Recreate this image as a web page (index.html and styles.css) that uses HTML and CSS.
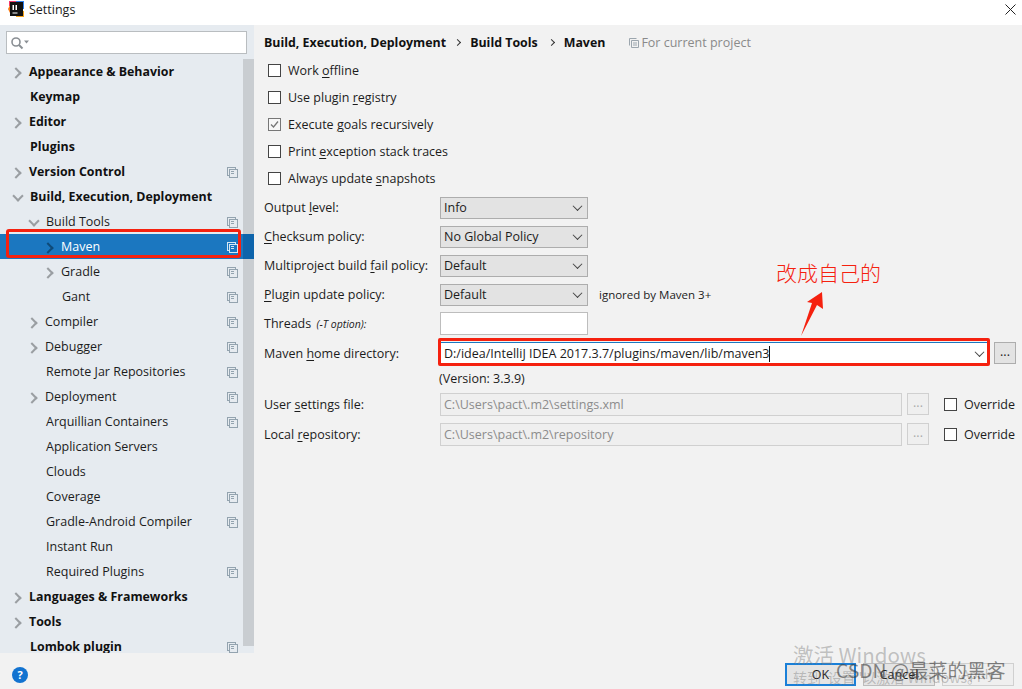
FILE: index.html
```html
<!DOCTYPE html>
<html lang="en">
<head>
<meta charset="utf-8">
<title>Settings</title>
<link rel="stylesheet" href="styles.css">
</head>
<body>
<div class="window">
  <header class="titlebar">
    <svg class="applogo" width="16" height="16" viewBox="0 0 16 16"><path d="M1 0h7v5H1z" fill="#f2386b"/><path d="M8 0h8v8H8z" fill="#2f80ed"/><path d="M0 8l3-6v12z" fill="#f97a12"/><path d="M8 10h8v6H8z" fill="#f4a21a"/><rect x="2" y="1" width="13" height="14" fill="#111"/><path d="M4.500 4h1.500v5H4.500zM7.500 4h1.500v5H7.500zM4.500 11.500h5v1h-5z" fill="#fff"/></svg>
    <span class="title">Settings</span>
    <svg class="close" width="11" height="11" viewBox="0 0 11 11"><path d="M.5.500l10 10M10.500.500l-10 10" stroke="#222" fill="none"/></svg>
  </header>
  <div class="main">
    <aside class="sidebar">
      <div class="search">
        <svg width="20" height="14" viewBox="0 0 20 14"><circle cx="6" cy="6" r="4" fill="none" stroke="#8a8f94" stroke-width="1.600"/><path d="M9 9l3.500 3.500" stroke="#8a8f94" stroke-width="2"/><path d="M14 4.500h5l-2.500 3z" fill="#8a8f94"/></svg>
      </div>
      <div class="treewrap">
        <nav class="tree">
          <div class="row b l0"><i class="arr r"></i><span>Appearance &amp; Behavior</span></div>
          <div class="row b l0"><i class="arr"></i><span>Keymap</span></div>
          <div class="row b l0"><i class="arr r"></i><span>Editor</span></div>
          <div class="row b l0"><i class="arr"></i><span>Plugins</span></div>
          <div class="row b l0 c"><i class="arr r"></i><span>Version Control</span></div>
          <div class="row b l0"><i class="arr d"></i><span>Build, Execution, Deployment</span></div>
          <div class="row l1 c"><i class="arr d"></i><span>Build Tools</span></div>
          <div class="row l2 c sel"><i class="arr r"></i><span>Maven</span></div>
          <div class="row l2 c"><i class="arr r"></i><span>Gradle</span></div>
          <div class="row l2 c"><i class="arr"></i><span>Gant</span></div>
          <div class="row l1 c"><i class="arr r"></i><span>Compiler</span></div>
          <div class="row l1 c"><i class="arr r"></i><span>Debugger</span></div>
          <div class="row l1 c"><i class="arr"></i><span>Remote Jar Repositories</span></div>
          <div class="row l1 c"><i class="arr r"></i><span>Deployment</span></div>
          <div class="row l1 c"><i class="arr"></i><span>Arquillian Containers</span></div>
          <div class="row l1"><i class="arr"></i><span>Application Servers</span></div>
          <div class="row l1"><i class="arr"></i><span>Clouds</span></div>
          <div class="row l1 c"><i class="arr"></i><span>Coverage</span></div>
          <div class="row l1 c"><i class="arr"></i><span>Gradle-Android Compiler</span></div>
          <div class="row l1"><i class="arr"></i><span>Instant Run</span></div>
          <div class="row l1 c"><i class="arr"></i><span>Required Plugins</span></div>
          <div class="row b l0"><i class="arr r"></i><span>Languages &amp; Frameworks</span></div>
          <div class="row b l0"><i class="arr r"></i><span>Tools</span></div>
          <div class="row b l0 c last"><i class="arr"></i><span>Lombok plugin</span></div>
        </nav>
        <div class="scroll"></div>
      </div>
    </aside>
    <section class="content">
      <div class="crumbs">
        <b>Build, Execution, Deployment</b><i class="sep"></i><b>Build Tools</b><i class="sep"></i><b>Maven</b>
        <span class="project"><svg class="copy" width="10" height="10" viewBox="0 0 10 10"><path d="M.500 7.500V.500h7M2.500 2.500h7v7h-7zM4 5h4M4 7h4" fill="none" stroke="#9ca6ae"/></svg>For current project</span>
      </div>
      <div class="checks">
        <label class="check"><i class="box"></i><span>Work <u>o</u>ffline</span></label>
        <label class="check"><i class="box"></i><span>Use plugin <u>r</u>egistry</span></label>
        <label class="check"><i class="box on"><svg width="13" height="13" viewBox="0 0 13 13"><path d="M3 6.500l2.500 2.500 4.500-5.500" fill="none" stroke="#777" stroke-width="1.300"/></svg></i><span>Execute <u>g</u>oals recursively</span></label>
        <label class="check"><i class="box"></i><span>Print <u>e</u>xception stack traces</span></label>
        <label class="check"><i class="box"></i><span>Always update <u>s</u>napshots</span></label>
      </div>
      <div class="fields">
        <div class="field"><span class="lab">Output <u>l</u>evel:</span><div class="combo"><span>Info</span><i class="chev"></i></div></div>
        <div class="field"><span class="lab"><u>C</u>hecksum policy:</span><div class="combo"><span>No Global Policy</span><i class="chev"></i></div></div>
        <div class="field"><span class="lab">Multiproject build <u>f</u>ail policy:</span><div class="combo"><span>Default</span><i class="chev"></i></div></div>
        <div class="field"><span class="lab"><u>P</u>lugin update policy:</span><div class="combo"><span>Default</span><i class="chev"></i></div><span class="hint">ignored by Maven 3+</span></div>
        <div class="field threads"><span class="lab">Threads <em>(-T option):</em></span><div class="input"></div></div>
        <div class="field home"><span class="lab">Maven <u>h</u>ome directory:</span><div class="homebox"><span class="caret">D:/idea/IntelliJ IDEA 2017.3.7/plugins/maven/lib/maven3</span><i class="chev"></i></div><div class="dots">...</div></div>
        <div class="version">(Version: 3.3.9)</div>
        <div class="field path"><span class="lab">User <u>s</u>ettings file:</span><div class="dis">C:\Users\pact\.m2\settings.xml</div><div class="dots off">...</div><label class="over"><i class="box"></i><span>Override</span></label></div>
        <div class="field path"><span class="lab">Local <u>r</u>epository:</span><div class="dis">C:\Users\pact\.m2\repository</div><div class="dots off">...</div><label class="over"><i class="box"></i><span>Override</span></label></div>
      </div>
    </section>
  </div>
  <footer class="footer">
    <span class="help">?</span>
    <div class="buttons">
      <div class="btn def">OK</div>
      <div class="btn">Cancel</div>
      <div class="btn off">Apply</div>
    </div>
  </footer>

  <div class="mark-sel"></div>
  <div class="mark-home"></div>
  <div class="note">改成自己的</div>
  <svg class="arrow" width="34" height="48" viewBox="0 0 34 48"><path d="M2 45L13 12 8 11 23 1 24 18 18 14z" fill="#f5210f"/></svg>
  <div class="wm wm1">激活 Windows</div>
  <div class="wm wm2">转到"设置"以激活 Windows。</div>
  <div class="wm csdn">CSDN @最菜的黑客</div>
</div>
</body>
</html>
```

FILE: styles.css
```css
* { box-sizing: border-box; }
html, body { margin: 0; padding: 0; }
body { font-family: "Open Sans", "Noto Sans CJK SC", sans-serif; font-size: 12.5px; color: #1c1c1c; overflow: hidden; }
u { text-underline-offset: 2px; text-decoration-thickness: 1px; }
.window { position: relative; width: 1022px; height: 689px; background: #f2f2f2; display: flex; flex-direction: column; overflow: hidden; }

.titlebar { height: 25px; background: #fff; display: flex; align-items: center; padding: 0 6px 7px 8px; flex: none; }
.applogo { flex: none; }
.title { margin-left: 5px; font-size: 12.500px; }
.close { margin-left: auto; }

.main { flex: none; height: 628px; display: flex; }
.sidebar { width: 254px; background: #e6ebf0; display: flex; flex-direction: column; flex: none; }
.search { height: 23px; margin: 6px 7px 0 6px; background: #fff; border: 1px solid #b9bdc0; display: flex; align-items: center; padding-left: 3px; }
.treewrap { position: relative; z-index: 0; flex: 1; margin-top: 5px; overflow: hidden; }
.tree { position: relative; z-index: 1; }
.row { height: 25px; display: flex; align-items: center; position: relative; }
.row.b { font-weight: 700; color: #111; font-size: 12.400px; }
.row.l0 { padding-left: 12px; }
.row.l1 { padding-left: 28px; }
.row.l2 { padding-left: 44px; }
.row.last { height: 19px; padding-top: 6px; line-height: 13px; }
.arr { width: 18px; height: 10px; flex: none; position: relative; display: block; }
.arr.r { width: 17px; }
.arr.r::before, .arr.d::before { content: ""; position: absolute; width: 6px; height: 6px; border-top: 2px solid #9a9ea2; border-right: 2px solid #9a9ea2; }
.arr.r::before { left: 0; top: 2px; transform: rotate(45deg); }
.arr.d::before { left: 2px; top: 0; transform: rotate(135deg); }
.row.c::after { content: ""; position: absolute; left: 229px; top: 10px; width: 7px; height: 7px; border: 1px solid #93a3af; background: linear-gradient(#93a3af, #93a3af) 1px 1px / 3px 1px no-repeat, linear-gradient(#93a3af, #93a3af) 1px 3px / 3px 1px no-repeat; box-shadow: -2px -2px 0 -1px #e6ebf0, -2px -2px 0 0 #93a3af; }
.row.sel { background: #1b77c0; color: #fff; }
.row.sel::before { content: ""; position: absolute; right: 0; top: 0; bottom: 0; width: 11px; background: #0e64ab; }
.row.sel .arr::before { border-color: #0f4a78; }
.row.sel::after { border-color: #d5e6f3; background: linear-gradient(#d5e6f3, #d5e6f3) 1px 1px / 3px 1px no-repeat, linear-gradient(#d5e6f3, #d5e6f3) 1px 3px / 3px 1px no-repeat; box-shadow: -2px -2px 0 -1px #1b77c0, -2px -2px 0 0 #d5e6f3; }
.scroll { position: absolute; right: 0; top: 0; width: 11px; bottom: 7px; background: #c9cdd1; }

.content { flex: 1; padding: 0 6px 0 10px; min-width: 0; }
.crumbs { height: 35px; display: flex; align-items: center; }
.crumbs b { font-weight: 700; color: #111; font-size: 12.400px; }
.sep { width: 5px; height: 5px; border-top: 1px solid #333; border-right: 1px solid #333; transform: rotate(45deg); margin: 0 10px 0 9px; display: block; }
.sep + b + .sep { margin-left: 11px; }
.project { margin-left: 24px; color: #8a8a8a; display: flex; align-items: center; gap: 2px; }
.checks { display: flex; flex-direction: column; margin-left: 4px; margin-top: -3px; }
.check { height: 27px; display: flex; align-items: center; gap: 7px; }
.box { width: 13px; height: 13px; background: #fff; border: 1px solid #444; display: block; flex: none; position: relative; }
.box.on { background: #f7f7f7; border-color: #777; }
.box svg { position: absolute; left: -1px; top: -1px; }
.fields { display: flex; flex-direction: column; margin-top: 1px; }
.field { display: flex; align-items: center; height: 29px; position: relative; }
.lab { width: 176px; flex: none; }
.lab em { font-size: 10.500px; margin-left: 2px; }
.combo { width: 148px; height: 22px; background: #e3e3e3; border: 1px solid #adadad; display: flex; align-items: center; justify-content: space-between; padding: 0 6px 0 3px; }
.chev { width: 7px; height: 7px; border-right: 1px solid #444; border-bottom: 1px solid #444; transform: rotate(45deg) translate(-1px, -1px); display: block; flex: none; }
.hint { margin-left: 11px; font-size: 11.500px; }
.threads { height: 29px; }
.input { width: 148px; height: 23px; background: #fff; border: 1px solid #bdbdbd; }
.home { height: 30px; }
.homebox { width: 548px; height: 22px; background: #fff; border-top: 1px solid #1b77c0; display: flex; align-items: center; justify-content: space-between; padding: 0 5px 0 4px; }
.caret { border-right: 1px solid #111; line-height: 16px; }
.dots { width: 22px; height: 22px; margin-left: 6px; background: #e3e3e3; border: 1px solid #adadad; display: flex; align-items: center; justify-content: center; padding-bottom: 3px; flex: none; }
.version { margin-left: 175px; height: 21px; display: flex; align-items: center; }
.path { height: 30px; }
.dis { width: 462px; height: 23px; background: #efefef; border: 1px solid #d0d0d0; color: #8c8c8c; display: flex; align-items: center; padding-left: 3px; flex: none; }
.dots.off { background: #efefef; border-color: #d0d0d0; color: #aaa; margin-left: 5px; }
.over { display: flex; align-items: center; gap: 7px; margin-left: 15px; }

.footer { flex: 1; display: flex; align-items: center; justify-content: space-between; padding: 6px 8px 0 12px; }
.help { width: 16px; height: 16px; margin-top: 1px; border-radius: 50%; background: #1273d0; color: #fff; font-weight: 700; font-size: 11px; display: flex; align-items: center; justify-content: center; }
.buttons { display: flex; gap: 7px; }
.btn { width: 72px; height: 23px; background: #e4e4e4; border: 1px solid #bcbcbc; display: flex; align-items: center; justify-content: center; }
.btn.def { border: 2px solid #1a80d8; width: 71px; }
.btn.off { background: #efefef; border-color: #d0d0d0; color: #b5b5b5; }

.mark-sel { position: absolute; z-index: 2; left: 6px; top: 229px; width: 235px; height: 29px; border: 3px solid #f5210f; border-radius: 3px; }
.mark-home { position: absolute; z-index: 2; left: 438px; top: 338px; width: 552px; height: 28px; border: 3px solid #f5210f; border-radius: 2px; }
.note { position: absolute; left: 776px; top: 259px; color: #f5210f; font-size: 21px; line-height: 26px; font-family: "Noto Sans CJK SC", sans-serif; font-weight: 300; }
.arrow { position: absolute; left: 799px; top: 291px; }
.wm { position: absolute; font-family: "Noto Sans CJK SC", sans-serif; white-space: nowrap; }
.wm1 { left: 793px; top: 641px; font-size: 20.500px; line-height: 26px; color: rgba(120,120,120,.42); }
.wm2 { left: 793px; top: 667px; font-size: 14px; line-height: 20px; color: rgba(120,120,120,.42); }
.csdn { left: 836px; top: 658px; font-size: 19.300px; line-height: 24px; color: rgba(60,60,60,.62); }
```
